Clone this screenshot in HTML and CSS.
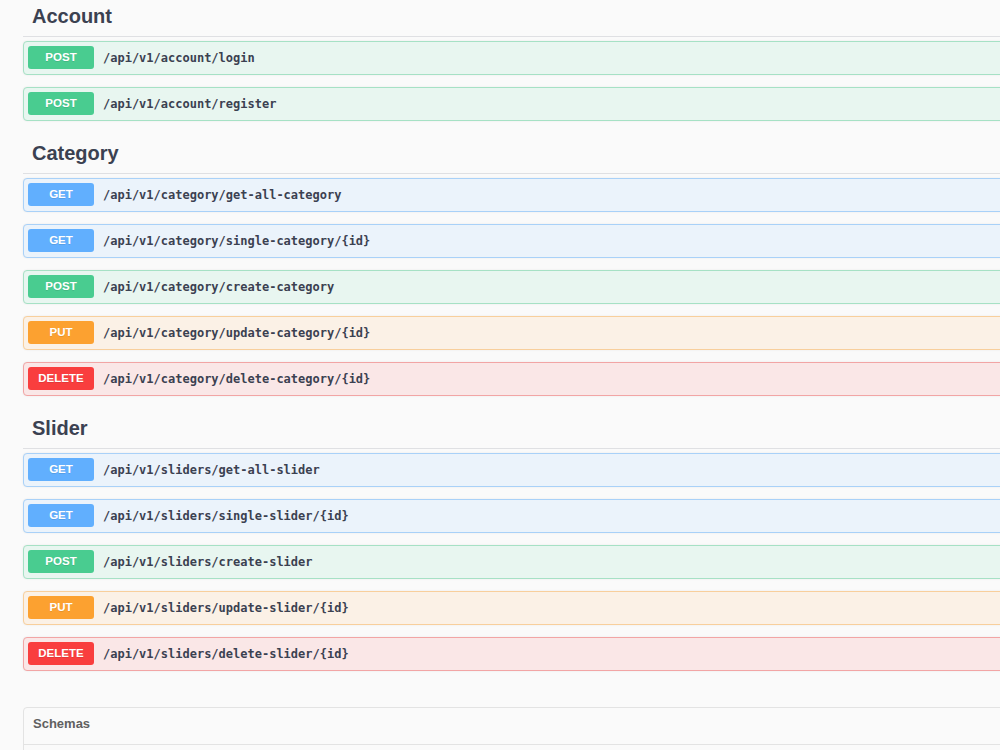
FILE: index.html
```html
<!DOCTYPE html>
<html lang="en">
	<head>
		<meta charset="UTF-8" />
		<meta name="viewport" content="width=device-width, initial-scale=1.0" />
		<title>Swagger UI</title>
		<link rel="stylesheet" href="styles.css">
	</head>

	<body>
		<div class="wrapper">
			<section class="tag-section">
				<h3 class="opblock-tag">Account</h3>
				<div class="opblock post">
					<span class="method">POST</span>
					<span class="path">/api/v1/account/login</span>
				</div>
				<div class="opblock post">
					<span class="method">POST</span>
					<span class="path">/api/v1/account/register</span>
				</div>
			</section>

			<section class="tag-section">
				<h3 class="opblock-tag">Category</h3>
				<div class="opblock get">
					<span class="method">GET</span>
					<span class="path">/api/v1/category/get-all-category</span>
				</div>
				<div class="opblock get">
					<span class="method">GET</span>
					<span class="path">/api/v1/category/single-category/{id}</span>
				</div>
				<div class="opblock post">
					<span class="method">POST</span>
					<span class="path">/api/v1/category/create-category</span>
				</div>
				<div class="opblock put">
					<span class="method">PUT</span>
					<span class="path">/api/v1/category/update-category/{id}</span>
				</div>
				<div class="opblock delete">
					<span class="method">DELETE</span>
					<span class="path">/api/v1/category/delete-category/{id}</span>
				</div>
			</section>

			<section class="tag-section">
				<h3 class="opblock-tag">Slider</h3>
				<div class="opblock get">
					<span class="method">GET</span>
					<span class="path">/api/v1/sliders/get-all-slider</span>
				</div>
				<div class="opblock get">
					<span class="method">GET</span>
					<span class="path">/api/v1/sliders/single-slider/{id}</span>
				</div>
				<div class="opblock post">
					<span class="method">POST</span>
					<span class="path">/api/v1/sliders/create-slider</span>
				</div>
				<div class="opblock put">
					<span class="method">PUT</span>
					<span class="path">/api/v1/sliders/update-slider/{id}</span>
				</div>
				<div class="opblock delete">
					<span class="method">DELETE</span>
					<span class="path">/api/v1/sliders/delete-slider/{id}</span>
				</div>
			</section>

			<section class="models">
				<h4>Schemas</h4>
				<div class="models-body"></div>
			</section>
		</div>
	</body>
</html>
```

FILE: styles.css
```css
:root {
	--bg-color:   #fafafa;
	--fg-color:   #3b4151;
	--ruler:      #dfe0e3;
	--get:        #61affe;
	--post:       #49cc90;
	--put:        #fca130;
	--delete:     #f93e3e;
}

html, body {
	margin: 0;
	padding: 0;
}

body {
	background: var(--bg-color);
	color: var(--fg-color);
	font-family: "Liberation Sans", Arial, sans-serif;
	overflow: hidden;
	height: 750px;
}

.wrapper {
	width: 1100px;
	margin-top: -4px;
	padding-left: 23px;
}

.opblock-tag {
	margin: 0 0 4px 0;
	padding: 8px 9px;
	font-size: 20px;
	line-height: 24px;
	font-weight: bold;
	border-bottom: 1px solid var(--ruler);
}

.opblock {
	display: flex;
	align-items: center;
	margin-bottom: 12px;
	padding: 4px 4px 5px;
	border: 1px solid;
	border-radius: 4px;
	box-shadow: 0 0 2px rgba(0, 0, 0, .08);
}

.method {
	width: 66px;
	height: 23px;
	line-height: 23px;
	text-align: center;
	border-radius: 3px;
	color: #fff;
	font-size: 11.5px;
	font-weight: bold;
	text-shadow: 0 1px 0 rgba(0, 0, 0, .1);
	flex-shrink: 0;
}

.path {
	padding-left: 9px;
	font-family: "DejaVu Sans Mono", monospace;
	font-size: 12px;
	font-weight: bold;
	color: var(--fg-color);
}

.opblock.get {
	background: #ebf3fb;
	border-color: #a9d1f8;
}
.opblock.get .method {
	background: var(--get);
}
.opblock.post {
	background: #e8f6f0;
	border-color: #a6e1c5;
}
.opblock.post .method {
	background: var(--post);
}
.opblock.put {
	background: #fbf1e6;
	border-color: #f8cf9c;
}
.opblock.put .method {
	background: var(--put);
}
.opblock.delete {
	background: #fae7e7;
	border-color: #f2a5a5;
}
.opblock.delete .method {
	background: var(--delete);
}

.models {
	margin-top: 36px;
	border: 1px solid #e3e3e3;
	border-radius: 4px;
}
.models h4 {
	margin: 0;
	padding: 8px 9px 12px;
	font-size: 13px;
	line-height: 16px;
	color: #606060;
	border-bottom: 1px solid #e3e3e3;
}
.models-body {
	height: 60px;
}
```
